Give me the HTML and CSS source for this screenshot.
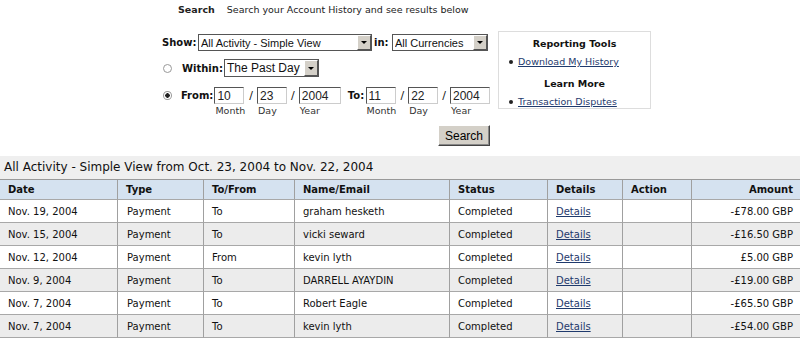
FILE: index.html
```html
<!DOCTYPE html>
<html lang="en">
<head>
  <meta charset="utf-8"/>
  <title>History</title>
  <link rel="stylesheet" href="styles.css">
</head>
<body>
  <div class="intro"><b>Search</b><span>Search your Account History and see results below</span></div>

  <div class="search-area">
    <form class="search-form" onsubmit="return false">
      <div class="row show-row">
        <label class="lbl show-lbl">Show:</label>
        <span class="select w-activity"><select><option>All Activity - Simple View</option></select><span class="arrow"></span></span>
        <label class="lbl in-lbl">in:</label>
        <span class="select w-currency"><select><option>All Currencies</option></select><span class="arrow"></span></span>
      </div>
      <div class="row within-row">
        <input type="radio" name="range" class="radio">
        <label class="lbl within-lbl">Within:</label>
        <span class="select w-within big"><select><option>The Past Day</option></select><span class="arrow"></span></span>
      </div>
      <div class="row from-row">
        <input type="radio" name="range" class="radio" checked>
        <label class="lbl from-lbl">From:</label>
        <div class="date"><input type="text" value="10" class="dd"><span>Month</span></div>
        <span class="slash">/</span>
        <div class="date"><input type="text" value="23" class="dd"><span>Day</span></div>
        <span class="slash">/</span>
        <div class="date"><input type="text" value="2004" class="yy"><span>Year</span></div>
        <label class="lbl to-lbl">To:</label>
        <div class="date"><input type="text" value="11" class="dd"><span>Month</span></div>
        <span class="slash">/</span>
        <div class="date"><input type="text" value="22" class="dd"><span>Day</span></div>
        <span class="slash">/</span>
        <div class="date"><input type="text" value="2004" class="yy2"><span>Year</span></div>
      </div>
      <div class="row btn-row"><button>Search</button></div>
    </form>

    <div class="side-box">
      <h4>Reporting Tools</h4>
      <ul><li><a href="#">Download My History</a></li></ul>
      <h4 class="learn">Learn More</h4>
      <ul><li><a href="#">Transaction Disputes</a></li></ul>
    </div>
  </div>

  <div class="title-band">All Activity - Simple View from Oct. 23, 2004 to Nov. 22, 2004</div>

  <table class="history">
    <colgroup>
      <col style="width:118px"><col style="width:86px"><col style="width:91px"><col style="width:155px">
      <col style="width:98px"><col style="width:75px"><col style="width:69px"><col style="width:108px">
    </colgroup>
    <thead>
      <tr><th>Date</th><th>Type</th><th>To/From</th><th>Name/Email</th><th>Status</th><th>Details</th><th>Action</th><th class="amt">Amount</th></tr>
    </thead>
    <tbody>
      <tr><td>Nov. 19, 2004</td><td class="type">Payment</td><td>To</td><td>graham hesketh</td><td>Completed</td><td><a href="#">Details</a></td><td></td><td class="amt">-£78.00 GBP</td></tr>
      <tr><td>Nov. 15, 2004</td><td class="type">Payment</td><td>To</td><td>vicki seward</td><td>Completed</td><td><a href="#">Details</a></td><td></td><td class="amt">-£16.50 GBP</td></tr>
      <tr><td>Nov. 12, 2004</td><td class="type">Payment</td><td>From</td><td>kevin lyth</td><td>Completed</td><td><a href="#">Details</a></td><td></td><td class="amt">£5.00 GBP</td></tr>
      <tr><td>Nov. 9, 2004</td><td class="type">Payment</td><td>To</td><td>DARRELL AYAYDIN</td><td>Completed</td><td><a href="#">Details</a></td><td></td><td class="amt">-£19.00 GBP</td></tr>
      <tr><td>Nov. 7, 2004</td><td class="type">Payment</td><td>To</td><td>Robert Eagle</td><td>Completed</td><td><a href="#">Details</a></td><td></td><td class="amt">-£65.50 GBP</td></tr>
      <tr><td>Nov. 7, 2004</td><td class="type">Payment</td><td>To</td><td>kevin lyth</td><td>Completed</td><td><a href="#">Details</a></td><td></td><td class="amt">-£54.00 GBP</td></tr>
    </tbody>
  </table>
</body>
</html>
```

FILE: styles.css
```css
body { margin:0; background:#fff; color:#111; font-family:"DejaVu Sans", Verdana, sans-serif; font-size:10px; }

.intro { height:20px; line-height:20px; padding-left:178px; font-size:9.5px; color:#222; }
.intro span { margin-left:12px; }

.search-area { display:flex; gap:8px; margin-top:11px; padding-left:160px; }
.search-form { width:330px; }
.row { display:flex; align-items:center; }
.lbl { font-weight:bold; box-sizing:border-box; }

.show-row { margin-top:3px; height:17px; }
.show-lbl { width:38px; padding-left:2px; }
.in-lbl { width:20px; padding-left:2px; }
.within-row { margin-top:8px; height:18px; }
.within-lbl { width:42px; }
.from-row { margin-top:10px; align-items:flex-start; }
.from-lbl { width:34px; line-height:17px; }
.to-lbl { width:25px; padding-left:7px; line-height:17px; }
.btn-row { margin-top:8px; justify-content:flex-end; }

.select { display:inline-flex; box-sizing:border-box; height:17px; border:1px solid #555; background:#fff; }
.select select { appearance:none; -webkit-appearance:none; flex:1; min-width:0; border:none; outline:none; background:#fff; padding:0 2px; margin:0; font-family:"Liberation Sans", Arial, sans-serif; font-size:11px; color:#111; }
.select .arrow { width:14px; box-sizing:border-box; background:#d4d0c8; border:1px solid; border-color:#fff #555 #555 #fff; display:flex; align-items:center; justify-content:center; }
.select .arrow::after { content:""; border-left:3px solid transparent; border-right:3px solid transparent; border-top:3px solid #000; }
.w-activity { width:174px; }
.w-currency { width:96px; }
.w-within { width:95px; height:18px; }
.big select { font-size:12px; }

.radio { appearance:none; -webkit-appearance:none; width:9px; height:9px; margin:0 10px 0 3px; border:1px solid #999; border-radius:50%; background:#fff; }
.radio:checked { background:radial-gradient(circle, #222 0 2px, #fff 2.5px); }
.from-row .radio { margin-top:4px; margin-right:9px; }

.date { display:flex; flex-direction:column; }
.date input { box-sizing:border-box; height:17px; border:1px solid; border-color:#555 #ccc #ccc #555; padding:0 2px; margin:0; font-family:"Liberation Sans", Arial, sans-serif; font-size:12px; color:#222; }
.date span { line-height:13px; padding-left:1px; font-size:9.5px; color:#333; }
.dd { width:30px; }
.yy { width:42px; }
.yy2 { width:40px; }
.slash { width:12px; text-align:center; line-height:17px; font-size:11px; }

button { width:52px; height:21px; padding:0; background:#d4d0c8; border:1px solid; border-color:#fff #444 #444 #fff; box-shadow:inset -1px -1px 0 #888; font-family:"Liberation Sans", Arial, sans-serif; font-size:12px; color:#000; }

.side-box { width:153px; height:78px; box-sizing:border-box; border:1px solid #ddd; padding:5px 0 0 10px; }
.side-box h4 { margin:0; line-height:14px; font-size:9.5px; text-align:center; padding-right:10px; }
.side-box h4.learn { margin-top:8px; }
.side-box ul { list-style:none; margin:4px 0 0; padding:0; }
.side-box li { display:flex; align-items:center; line-height:14px; }
.side-box li::before { content:""; width:4px; height:4px; border-radius:50%; background:#222; margin-right:5px; }
a { color:#1f3a6d; }
.side-box a { font-size:9.5px; }

.title-band { margin-top:10px; height:23px; line-height:23px; padding-left:4px; background:#efefef; font-size:12px; color:#111; }

.history { width:800px; table-layout:fixed; border-collapse:separate; border-spacing:0; border-top:1px solid #999; }
.history th, .history td { text-align:left; padding:0 0 0 8px; border-right:1px solid #a0a0a0; border-bottom:1px solid #a8a8a8; white-space:nowrap; overflow:hidden; }
.history th { height:19px; background:#d5e2f0; font-weight:bold; }
.history td { height:22px; }
.history th:last-child, .history td:last-child { border-right:none; }
.history tbody tr:nth-child(even) td { background:#ececec; }
.history .amt { text-align:right; padding:0 7px 0 0; }
.history .type { padding-left:9px; }
```
